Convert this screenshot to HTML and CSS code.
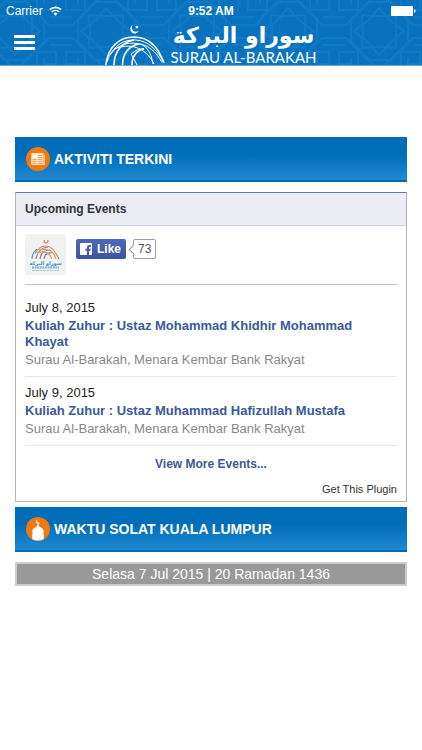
FILE: index.html
```
<!DOCTYPE html>
<html lang="ms">
<head>
<meta charset="utf-8">
<meta name="viewport" content="width=device-width, initial-scale=1">
<title>Surau Al-Barakah</title>
<link rel="stylesheet" href="styles.css">
</head>
<body>
<header class="header">
  <svg class="header-pattern" aria-hidden="true">
    <defs>
      <pattern id="lattice" x="334" y="-14" width="91" height="90" patternUnits="userSpaceOnUse">
        <g fill="none" stroke="#2087ce" stroke-width="2" stroke-opacity=".38">
          <path d="M39 30h13l10 9v13l-10 9H39l-10-9V39zM45 22l7 8 10-1v10l8 6-8 7v10l-10-1-7 8-7-8-10 1V52l-8-7 8-6V29l10 1z"/>
          <path d="M34 16h23l17 17v24L57 74H34L17 57V33zM39 0v12L17 34M52 0v12l22 22M39 90V78L17 56M52 90V78l22-22M0 39h12l22-22M91 39H79L57 17M0 52h12l22 22M91 52H79L57 74"/>
          <path d="M0 5h24v19H5V12h12v6M0 31h11M31 0v11M91 5H67v19h19V12H74v6M91 31H80M60 0v11M0 85h24V66H5v12h12v-6M0 59h11M31 90V79M91 85H67V66h19v12H74v-6M91 59H80M60 90V79"/>
        </g>
      </pattern>
    </defs>
    <rect width="100%" height="100%" fill="url(#lattice)"/>
  </svg>
  <div class="status">
    <span class="carrier">Carrier
      <svg width="13" height="10" viewBox="0 0 13 10" aria-hidden="true"><g fill="none" stroke="#fff" stroke-width="1.6"><path d="M.8 3.7a8.2 8.2 0 0 1 11.4 0M2.8 5.9a5.4 5.4 0 0 1 7.4 0"/></g><path d="M6.5 9.8 4.4 7.6a3 3 0 0 1 4.2 0z" fill="#fff"/></svg>
    </span>
    <span class="clock">9:52 AM</span>
    <svg class="battery" width="25" height="10" viewBox="0 0 25 10" aria-hidden="true"><rect width="22" height="10" rx="1" fill="#fff"/><path d="M23 3.3q1.6 0 1.6 1.7T23 6.7z" fill="#fff"/></svg>
  </div>
  <div class="nav">
    <button class="menu" type="button" aria-label="Menu"><span></span><span></span><span></span></button>
    <a class="brand" href="#">
      <svg width="60" height="41" viewBox="0 0 60 41" aria-hidden="true">
        <path d="M28 .8A4.500 4.500 0 1 0 34 6.500 3.700 3.700 0 0 1 28 .8z" fill="#fff"/>
        <path d="m32 1 .6 1.200 1.300.2-.9.9.2 1.300-1.200-.6-1.200.6.2-1.300-.9-.9 1.300-.2z" fill="#fff"/>
        <g fill="none" stroke="#fff">
          <path d="M.8 41C3 23 14 13 29 13c14 0 24 9 30 26" stroke-width="1.500"/>
          <path d="M9 41c0-13 8-23 20-25M17.500 41c0-12 7-19 16-21M27 41c0-9 5-15 12-16" stroke-width="1.600"/>
          <path d="M2 38C7 22 19 15 31 16c12 1 21 9 28 23M5 31C12 21 22 18 32 19.500c11 1 19 8 25 19M9 25c15-6 31-3 40 15M33 20c7 0 13 7 15 20M39 25c-5-1-9 2-13 5q3 5 6 11"/>
        </g>
      </svg>
      <span class="brand-text">
        <span class="brand-arabic" lang="ar" dir="rtl">سوراو البركة</span>
        <span class="brand-latin">SURAU AL-BARAKAH</span>
      </span>
    </a>
  </div>
</header>

<main class="content">
  <h2 class="bar">
    <svg width="24" height="24" viewBox="0 0 24 24" aria-hidden="true"><circle cx="12" cy="12" r="12" fill="#f5780f"/><path d="M5.500 6h12v2h1.500v10H6.500q-1.500 0-1.500-1.500z" fill="#ffe5cc"/><path d="M6.500 7.500h4v3.500h-4z" fill="#fff"/><path d="M12 8.500h4.500M12 10.500h4.500M6.500 12.500h4M6.500 14.500h4M6.500 16.500h4M12 12.500h4.500M12 14.500h4.500M12 16.500h4.500M17.800 8v9.500" stroke="#f08a35" stroke-width=".8"/></svg>
    Aktiviti Terkini
  </h2>

  <section class="panel">
    <h3 class="panel-title">Upcoming Events</h3>
    <div class="panel-body">
      <div class="social">
        <svg width="41" height="41" viewBox="0 0 41 41" role="img" aria-label="Surau Al-Barakah">
          <rect width="41" height="41" fill="#f1f1f2"/>
          <path d="M19 6q0 3 2 3t2-3" fill="none" stroke="#d98356" stroke-width="1.200"/>
          <g fill="none" stroke-width="1.200"><path d="M10 20Q14 12 21 12t13 13" stroke="#d38b6a"/><path d="M11 25q2-11 12-12M15 25q1-9 10-9M19 25q1-7 8-6" stroke="#8b7d91"/><path d="M14 16q14-3 17 9M12 19q11-4 15 6" stroke="#df9b73"/><path d="M7 25q0-6 5-10" stroke="#4593bf"/></g>
          <text class="thumb-arabic" x="20.500" y="31" text-anchor="middle">سوراو البركة</text>
          <path d="M7 33.500h27" stroke="#76b4d6" stroke-width="2" stroke-dasharray="2 .6"/><path d="M7 36.500h27" stroke="#a5cbdf" stroke-dasharray="3 .6"/>
        </svg>
        <button class="like" type="button">
          <svg width="12" height="12" viewBox="0 0 12 12" aria-hidden="true"><path fill="#fff" fill-rule="evenodd" d="M1 0h10q1 0 1 1v10q0 1-1 1H9V7.700h1.500l.3-1.900H9V4.700q0-.8.900-.8h1V2.100H9.300Q6.900 2.100 6.900 4.500v1.300H5.400v1.900h1.500V12H1q-1 0-1-1V1q0-1 1-1z"/></svg>
          Like
        </button>
        <span class="count">73</span>
      </div>
      <ul class="events">
        <li>
          <time datetime="2015-07-08">July 8, 2015</time>
          <a href="#">Kuliah Zuhur : Ustaz Mohammad Khidhir Mohammad Khayat</a>
          <p>Surau Al-Barakah, Menara Kembar Bank Rakyat</p>
        </li>
        <li>
          <time datetime="2015-07-09">July 9, 2015</time>
          <a href="#">Kuliah Zuhur : Ustaz Muhammad Hafizullah Mustafa</a>
          <p>Surau Al-Barakah, Menara Kembar Bank Rakyat</p>
        </li>
      </ul>
      <a class="more" href="#">View More Events...</a>
      <a class="plugin" href="#">Get This Plugin</a>
    </div>
  </section>

  <h2 class="bar">
    <svg width="24" height="24" viewBox="0 0 24 24" aria-hidden="true"><circle cx="12" cy="12" r="12" fill="#f5780f"/><path d="M12 8q1.500 1.800 3.800 3t2 4.500h-.8v1h.8V22q-6 3-11.600 0v-5.500H7v-1h-.8q-.3-3.300 2-4.500T12 8z" fill="#fff"/><path d="M12 6.500v3" stroke="#fff" stroke-width="1.200"/><path d="M11.800 2.500a2.200 2.200 0 1 0 2.400 2.800 1.800 1.800 0 0 1-2.400-2.800z" fill="#fff"/></svg>
    Waktu Solat Kuala Lumpur
  </h2>
  <p class="date">Selasa 7 Jul 2015 | 20 Ramadan 1436</p>
</main>
</body>
</html>
```
FILE: styles.css
```
* {
  box-sizing: border-box;
}

body {
  margin: 0;
  background: #fff;
  color: #222;
  font: 13px/16px "Liberation Sans", Arial, sans-serif;
}

h2, h3, p, ul {
  margin: 0;
  padding: 0;
}

a {
  text-decoration: none;
}

button {
  border: 0;
  font: inherit;
  color: #fff;
}

/* Header */
.header {
  position: relative;
  overflow: hidden;
  background: #0872bf;
  border-bottom: 1px solid #67a9d8;
  color: #fff;
}

.header-pattern {
  position: absolute;
  inset: 0;
  width: 100%;
  height: 100%;
}

.status,
.nav {
  position: relative;
  display: grid;
  grid-template-columns: 1fr auto 1fr;
}

.status {
  align-items: center;
  height: 22px;
  padding: 0 6px;
  font-size: 12px;
}

.carrier {
  display: flex;
  align-items: center;
  gap: 6px;
}

.clock {
  font-weight: bold;
}

.battery {
  justify-self: end;
}

.nav {
  align-items: end;
}

.menu {
  display: flex;
  flex-direction: column;
  gap: 3px;
  justify-self: start;
  padding: 0 14px 15px;
  background: none;
}

.menu span {
  width: 21px;
  height: 3px;
  background: #fff;
}

.brand {
  display: flex;
  gap: 5px;
  align-items: end;
  color: #fff;
}

.brand svg {
  display: block;
}

.brand-text {
  display: flex;
  flex-direction: column;
  align-items: center;
  white-space: nowrap;
}

.brand-arabic {
  font: bold 22px/28px "DejaVu Sans", sans-serif;
}

.brand-latin {
  font: 15px/15px Lato, sans-serif;
}

/* Content */
.content {
  padding: 71px 15px 24px;
}

.bar {
  display: flex;
  align-items: center;
  gap: 4px;
  height: 45px;
  padding: 0 11px;
  border-bottom: 2px solid #0967ad;
  background: linear-gradient(#006db9 40%, #2089d3);
  color: #fff;
  font-size: 14px;
  text-transform: uppercase;
}

.panel {
  margin: 10px 0 5px;
  border: 1px solid #b5b5b5;
  border-top-color: #5f7fa8;
}

.panel-title {
  padding: 8px;
  border-bottom: 1px solid #c9d0e4;
  background: #ecedf4;
  color: #333;
  font-size: 12px;
}

.panel-body {
  display: flex;
  flex-direction: column;
  padding: 8px 8px 4px;
}

.social {
  display: flex;
  gap: 10px;
  padding-bottom: 9px;
  border-bottom: 1px solid #c4c4c4;
}

.thumb-arabic {
  fill: #2795c8;
  font: bold 5px "DejaVu Sans", sans-serif;
}

.like {
  display: flex;
  align-items: center;
  gap: 5px;
  height: 20px;
  margin-top: 5px;
  padding: 0 5px 0 4px;
  border-radius: 2px;
  background: linear-gradient(#4e69b8, #3b55a0);
  font-size: 12px;
  font-weight: bold;
}

.count {
  position: relative;
  height: 20px;
  margin: 5px 0 0 -3px;
  padding: 1px 4px;
  border: 1px solid #9a9da5;
  border-radius: 2px;
  color: #555;
  font-size: 12px;
}

.count::before {
  content: "";
  position: absolute;
  top: 6px;
  left: -4px;
  width: 6px;
  height: 6px;
  border: solid #9a9da5;
  border-width: 0 0 1px 1px;
  background: #fff;
  transform: rotate(45deg);
}

.panel-title,
.panel-body {
  padding-left: 9px;
  padding-right: 9px;
}

.events {
  padding-top: 7px;
  list-style: none;
}

.events li {
  padding: 8px 0;
  border-bottom: 1px solid #e6e6e6;
}

.events time,
.events a {
  display: block;
  padding-bottom: 2px;
}

.events a,
.more {
  color: #3b5998;
  font-weight: bold;
}

.events p {
  color: #888;
}

.more {
  align-self: center;
  margin: 10px 0 9px;
  font-size: 12px;
}

.plugin {
  align-self: end;
  color: #333;
  font-size: 11px;
}

.date {
  margin-top: 10px;
  padding: 2px;
  border: 2px solid #ccc;
  background: #999;
  color: #fff;
  font-size: 14px;
  text-align: center;
}
```
